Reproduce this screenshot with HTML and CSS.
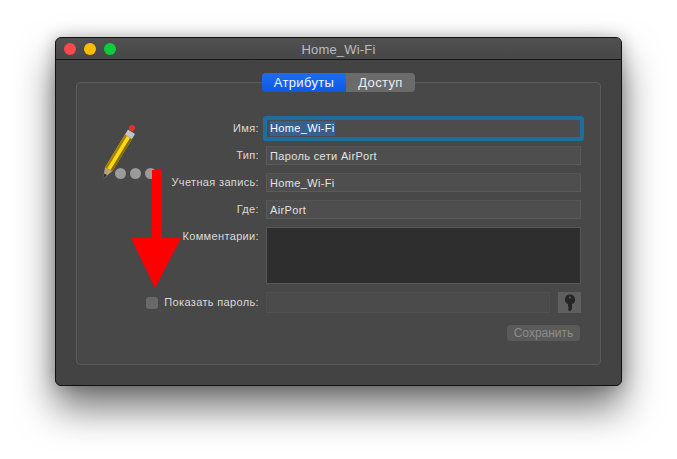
FILE: index.html
```html
<!DOCTYPE html>
<html lang="ru">
<head>
<meta charset="utf-8">
<title>Home_Wi-Fi</title>
<link rel="stylesheet" href="styles.css">
</head>
<body>
<main class="window">
  <header class="titlebar">
    <div class="lights">
      <span class="light red"></span>
      <span class="light yellow"></span>
      <span class="light green"></span>
    </div>
    <div class="title">Home_Wi-Fi</div>
  </header>
  <div class="content">
    <section class="group">
      <nav class="tabs">
        <button class="tab active">Атрибуты</button>
        <button class="tab">Доступ</button>
      </nav>
      <div class="form">
        <div class="keyicon">
          <svg class="pencil" width="60" height="60" viewBox="0 0 60 60">
            <path d="M1 54 L3 42.500 L10.500 46 Z" fill="#b99f7c"/>
            <path d="M1 54 L2 48.500 L5 50 Z" fill="#2c2c2c"/>
            <path d="M3 42.500 L23 9.500 L30 14 L10.500 46 Z" fill="#f5dc0a"/>
            <path d="M3 42.500 L23 9.500 L25 10.800 L5.200 43.600 Z" fill="#a87f00"/>
            <path d="M8.500 45 L28 13 L30 14 L10.500 46 Z" fill="#8a6500"/>
            <path d="M23 9.500 L26 4.500 L33 9 L30 14 Z" fill="#c4c4c4"/>
            <circle cx="30" cy="3" r="3" fill="#e6322b"/>
          </svg>
          <div class="dots"><i></i><i></i><i></i></div>
        </div>

        <label class="lbl r1">Имя:</label>
        <div class="field focus r1"><span class="sel">Home_Wi-Fi</span></div>

        <label class="lbl r2">Тип:</label>
        <div class="field r2">Пароль сети AirPort</div>

        <label class="lbl r3">Учетная запись:</label>
        <div class="field r3">Home_Wi-Fi</div>

        <label class="lbl r4">Где:</label>
        <div class="field r4">AirPort</div>

        <label class="lbl top r5">Комментарии:</label>
        <div class="comment r5"></div>

        <label class="lbl show r6"><span class="check"></span>Показать пароль:</label>
        <div class="passrow r6">
          <div class="pass"></div>
          <div class="keybtn">
            <svg width="12" height="18" viewBox="0 0 12 18">
              <path fill-rule="evenodd" fill="#262626" d="M6 0.500a5 5 0 0 1 2 9.600V15l-2 2.500L4.200 15.800V14.500L5 13.800 4 13V10.100A5 5 0 0 1 6 0.500ZM6 2.600a1 1 0 1 0 0 2a1 1 0 1 0 0-2Z"/>
            </svg>
          </div>
        </div>

        <div class="actions r7"><button class="save">Сохранить</button></div>
      </div>
    </section>
  </div>
  <svg class="arrow" width="52" height="120" viewBox="0 0 52 120">
    <path d="M21 0H31V68H50L24 118L0 68H21Z" fill="#fe0000"/>
  </svg>
</main>
</body>
</html>
```
FILE: styles.css
```css
* { box-sizing: border-box; }
html, body { margin: 0; }
body {
  width: 677px;
  height: 459px;
  overflow: hidden;
  background: #fff;
  padding: 37px 55px 0;
  font-family: "Liberation Sans", Arial, sans-serif;
  font-size: 11px;
  letter-spacing: 0.35px;
  color: #dcdcdc;
}
.window {
  position: relative;
  width: 567px;
  height: 349px;
  background: #434343;
  border: 1px solid #111;
  border-radius: 6px;
  box-shadow: 0 22px 38px rgba(0,0,0,.55), 0 0 16px rgba(0,0,0,.25);
}
.titlebar {
  position: relative;
  height: 22px;
  display: flex;
  align-items: center;
  justify-content: center;
  padding-top: 1px;
  background: linear-gradient(#505050, #474747);
  border-bottom: 1px solid #161616;
  border-radius: 5px 5px 0 0;
}
.lights {
  position: absolute;
  left: 8px;
  top: 5px;
  display: flex;
  gap: 8px;
}
.light { width: 12px; height: 12px; border-radius: 50%; }
.red { background: #f9494a; }
.yellow { background: #fdbb06; }
.green { background: #0ccd3b; }
.title {
  font-size: 13px;
  letter-spacing: 0.2px;
  color: #bcbcbc;
}
.content { padding: 22px 20px 0; }
.group {
  height: 283px;
  background: #484848;
  border: 1px solid #5b5b5b;
  border-radius: 4px;
}
.tabs {
  display: flex;
  width: 153px;
  height: 19px;
  margin: -10px 0 0 185px;
}
.tab {
  border: 0;
  padding: 0;
  font: inherit;
  font-size: 13px;
  letter-spacing: 0.35px;
  color: #ececec;
  background: #6b6b6b;
  flex: 1 1 69px;
  border-radius: 0 4px 4px 0;
}
.tab.active {
  flex: 1 1 84px;
  color: #f2f6ff;
  background: linear-gradient(#1f6cf3, #0f58e2);
  border-radius: 4px 0 0 4px;
}
.form {
  display: grid;
  grid-template-columns: 182px 315px;
  grid-template-rows: 19px 19px 19px 19px 57px 21px 16px;
  column-gap: 7px;
  row-gap: 8px;
  padding: 27px 0 0 0;
}
.r1 { grid-row: 1; }
.r2 { grid-row: 2; }
.r3 { grid-row: 3; }
.r4 { grid-row: 4; }
.r5 { grid-row: 5; }
.r6 { grid-row: 6; }
.r7 { grid-row: 7; }
.keyicon {
  grid-column: 1;
  grid-row: 1 / 5;
  margin: 6px 0 0 25px;
  position: relative;
  width: 58px;
}
.pencil { display: block; }
.dots {
  position: absolute;
  left: 13px;
  top: 43px;
  display: flex;
  gap: 4px;
}
.dots i {
  width: 11px;
  height: 11px;
  border-radius: 50%;
  background: #9b9b9b;
}
.lbl {
  grid-column: 1;
  text-align: right;
  line-height: 19px;
  color: #dadada;
}
.lbl.top { align-self: start; line-height: 18px; }
.field {
  grid-column: 2;
  background: #4e4e4e;
  border: 1px solid #5a5a5a;
  border-top-color: #545454;
  padding-left: 3px;
  line-height: 18px;
  color: #e2e2e2;
}
.field.focus {
  box-shadow: 0 0 0 3px #1f6e9e;
  border-color: #1f6e9e;
  border-radius: 1px;
  background: #4c4c4c;
  color: #fff;
}
.sel {
  display: inline-block;
  background: #38608f;
  height: 15px;
  line-height: 15px;
  vertical-align: top;
  margin-top: 1px;
}
.comment {
  grid-column: 2;
  background: #2e2e2e;
  border: 1px solid #565656;
}
.show {
  display: flex;
  justify-content: flex-end;
  align-items: center;
  gap: 6px;
  line-height: 21px;
}
.check {
  width: 12px;
  height: 12px;
  border-radius: 3px;
  background: #696969;
}
.passrow {
  grid-column: 2;
  display: flex;
  gap: 8px;
}
.pass {
  flex: 1;
  background: #4b4b4b;
  border: 1px solid #505050;
}
.keybtn {
  width: 23px;
  background: #5f5f5f;
  display: flex;
  align-items: center;
  justify-content: center;
}
.actions {
  grid-column: 2;
  margin-top: 4px;
  height: 16px;
  display: flex;
  justify-content: flex-end;
}
.save {
  width: 73px;
  height: 16px;
  margin-right: 1px;
  padding: 0;
  border: 0;
  border-radius: 4px;
  background: #5a5a5a;
  font: inherit;
  font-size: 12px;
  color: #8c8c8c;
}
.arrow {
  position: absolute;
  left: 75px;
  top: 132px;
}
```
